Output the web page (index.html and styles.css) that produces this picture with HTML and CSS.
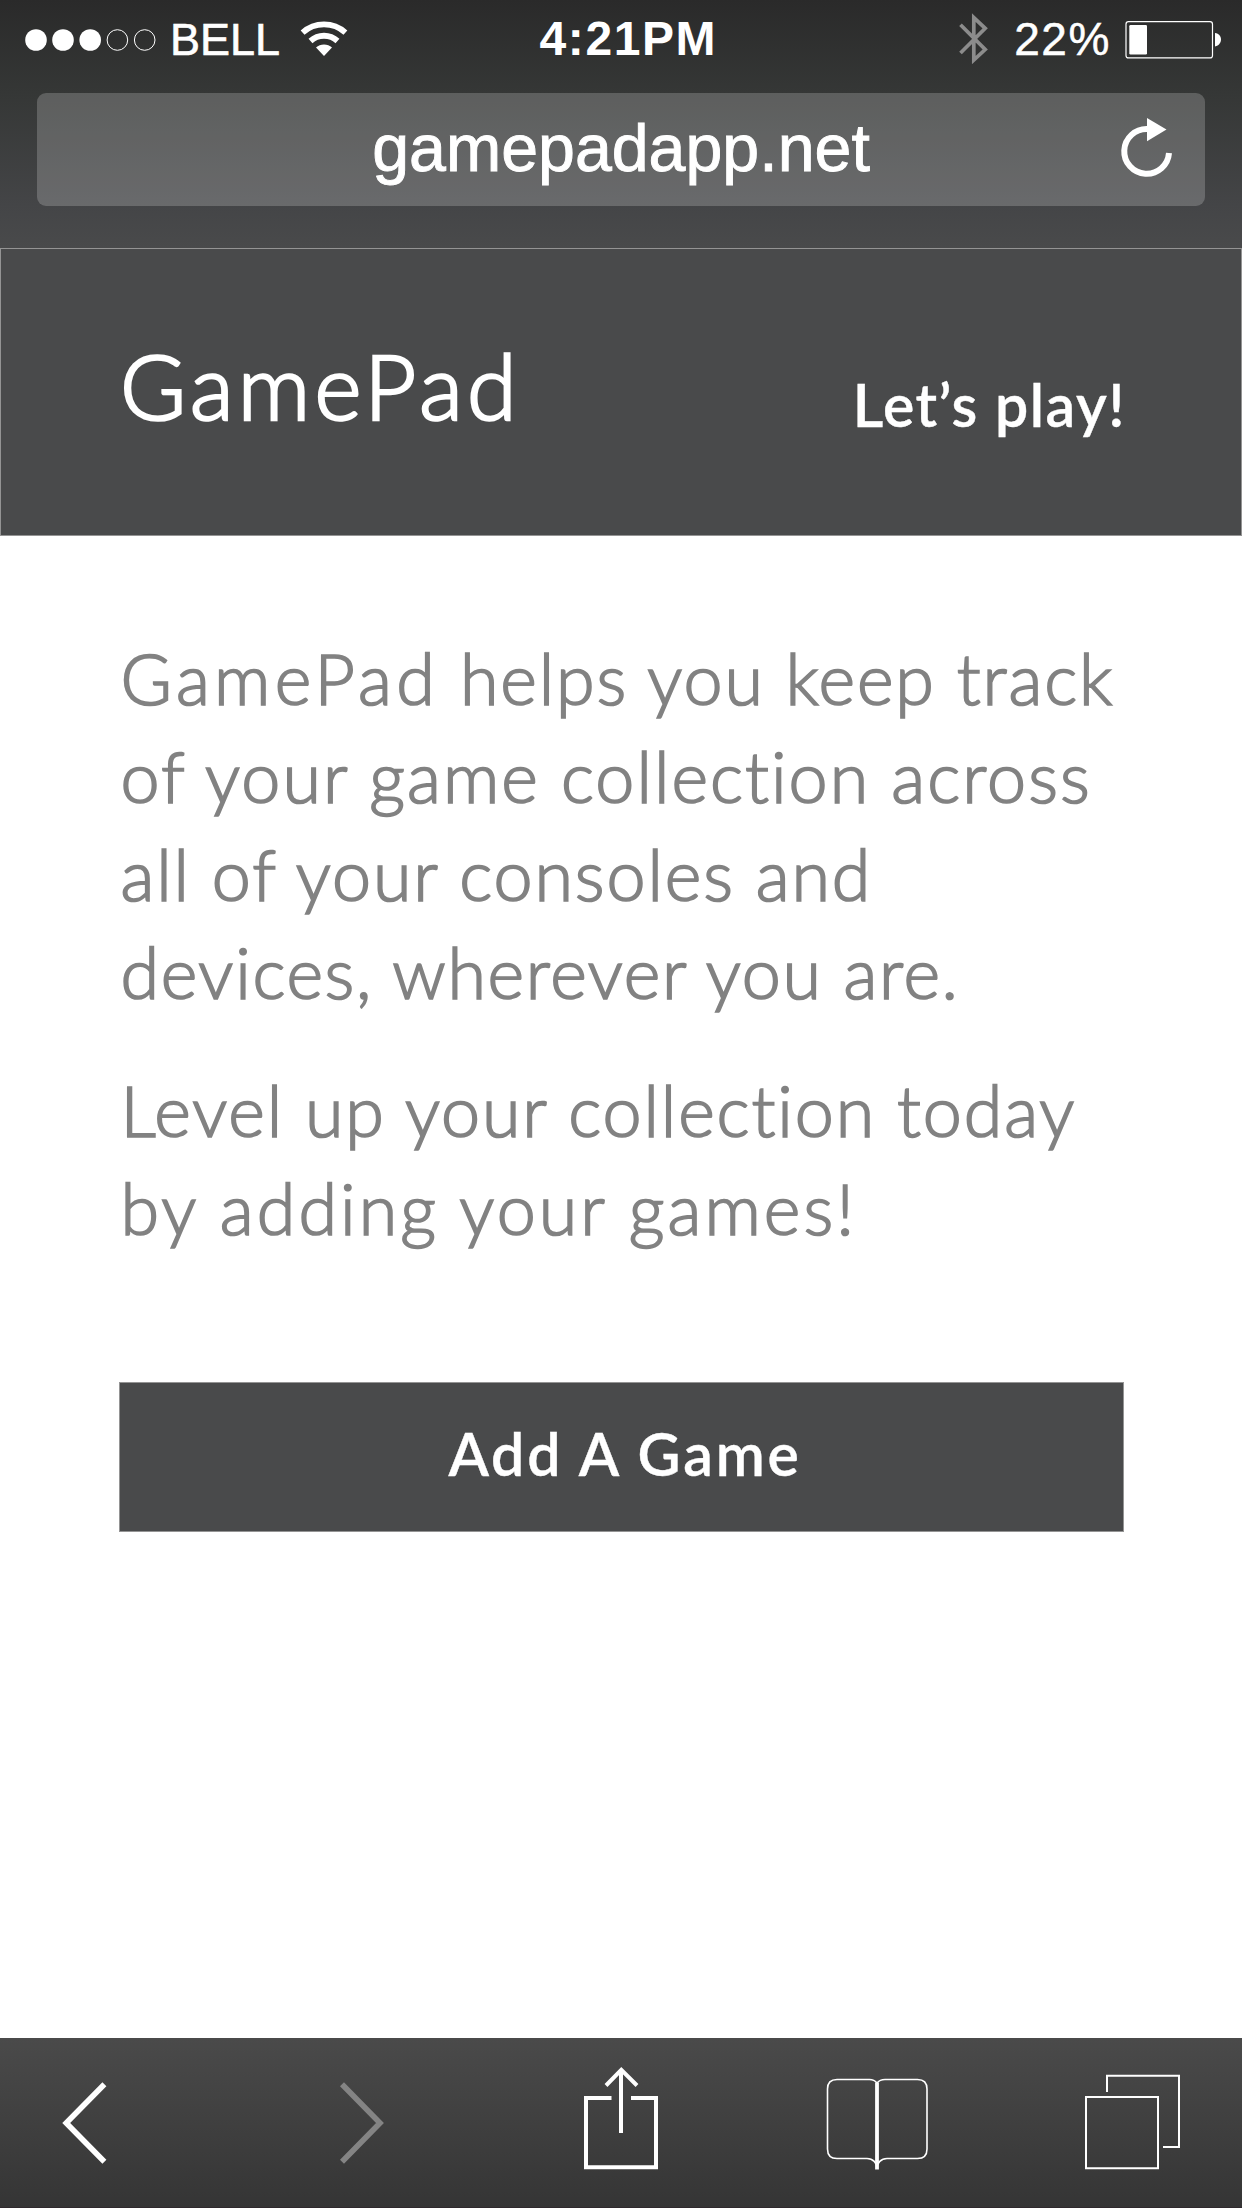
FILE: index.html
```
<!DOCTYPE html>
<html lang="en">
<head>
<meta charset="utf-8">
<title>GamePad</title>
<link rel="stylesheet" href="styles.css">
</head>
<body>
<div class="screen">
  <div class="chrome">
    <div class="status">
      <div class="status-left">
        <svg class="dots" viewBox="24 0 134 93" width="134" height="93">
          <g fill="#fff"><circle cx="36" cy="40" r="10.8"/><circle cx="63" cy="40" r="10.8"/><circle cx="90.2" cy="40" r="10.8"/></g>
          <g fill="none" stroke="#fff" stroke-width="1"><circle cx="117.4" cy="40" r="10.3"/><circle cx="144.7" cy="40" r="10.3"/></g>
        </svg>
        <span class="carrier">BELL</span>
        <svg class="wifi" viewBox="296 0 56 93" width="56" height="93">
          <g fill="none" stroke="#fff" stroke-width="5.8">
            <path d="M302.6 32.6A32 32 0 0 1 345.4 32.6"/>
            <path d="M310.5 41A20 20 0 0 1 337.5 41"/>
          </g>
          <path d="M324 56L316 47.6A11.7 11.7 0 0 1 332 47.6Z" fill="#fff"/>
        </svg>
      </div>
      <span class="time">4:21PM</span>
      <div class="status-right">
        <svg class="bluetooth" viewBox="955 0 38 93" width="38" height="93">
          <path d="M960.5 24.7L985.2 49.5L973.8 60V17.6L985.2 28.3L960.5 53" fill="none" stroke="#8c8c8c" stroke-width="3.7" stroke-miterlimit="6"/>
        </svg>
        <span class="percent">22%</span>
        <svg class="battery" viewBox="1120 0 105 93" width="105" height="93">
          <rect x="1126" y="21.7" width="86.5" height="36.2" rx="2.5" fill="none" stroke="#fff" stroke-width="1.2"/>
          <rect x="1129.3" y="25" width="17.7" height="29.4" rx="1.2" fill="#fff"/>
          <path d="M1215 33C1223 34 1223 45 1215 46.4Z" fill="#fff"/>
        </svg>
      </div>
    </div>
    <div class="address">
      <span></span>
      <span class="url">gamepadapp.net</span>
      <svg class="reload" viewBox="1115 93 60 113" width="60" height="113">
        <path d="M1147.5 129A22.4 22.4 0 1 0 1169 153" fill="none" stroke="#fff" stroke-width="6"/>
        <path d="M1147 118L1166.5 129.5L1147 141.2Z" fill="#fff"/>
      </svg>
    </div>
  </div>

  <header class="banner">
    <h1 class="title">GamePad</h1>
    <a class="play">Let’s play!</a>
  </header>

  <main class="content">
    <p class="copy"><span class="brand">GamePad</span> helps you keep track<br><span class="l2">of your game collection across</span><br>all of your consoles and<br><span class="l4">devices, wherever you are.</span></p>
    <p class="copy">Level up your collection today<br><span class="l6">by adding your games!</span></p>
    <a class="button">Add A Game</a>
  </main>

  <nav class="toolbar">
    <svg viewBox="60 2038 50 170" width="50" height="170"><path d="M104.4 2084.3L66.2 2123L104.4 2161.7" fill="none" stroke="#fff" stroke-width="5.6"/></svg>
    <svg viewBox="338 2038 50 170" width="50" height="170"><path d="M342 2084.3L380 2123L342 2161.7" fill="none" stroke="#848484" stroke-width="5.6"/></svg>
    <svg viewBox="580 2038 82 170" width="82" height="170">
      <path d="M611.5 2098H586V2167.3H656V2098H631M621 2133V2071M606 2085.5L621.3 2069.8L637 2085.5" fill="none" stroke="#fff" stroke-width="4"/>
    </svg>
    <svg viewBox="824 2038 106 170" width="106" height="170">
      <g fill="none" stroke="#fff">
        <path stroke-width="1.6" d="M877 2083C875 2080.5 873 2079.5 869.5 2079.5H837Q827.5 2079.5 827.5 2089V2149Q827.5 2158.5 837 2158.5H867C873 2158.5 877 2163 877 2168C877 2163 881 2158.5 887 2158.5H917.5Q927 2158.5 927 2149V2089Q927 2079.5 917.5 2079.5H885C881.5 2079.5 879 2080.5 877 2083"/>
        <path stroke-width="3.8" d="M877 2082.5V2169.5"/>
      </g>
    </svg>
    <svg viewBox="1082 2038 100 170" width="100" height="170">
      <path d="M1086 2097H1158V2168.3H1086ZM1107 2092V2075.7H1179V2147H1163" fill="none" stroke="#fff" stroke-width="2"/>
    </svg>
  </nav>
</div>
</body>
</html>
```
FILE: styles.css
```
* { box-sizing: border-box; }
body { margin: 0; background: #fff; }
svg { display: block; flex: none; }

.screen {
  width: 1242px;
  height: 2208px;
  display: flex;
  flex-direction: column;
  overflow: hidden;
}

/* Browser chrome: status row and address bar */
.chrome {
  height: 248px;
  flex: none;
  background: linear-gradient(#2a2a2a 0, #353736 93px, #444547 205px, #494a4b 248px);
  color: #fff;
  font-family: "Liberation Sans", Arial, sans-serif;
}
.status {
  height: 93px;
  display: grid;
  grid-template-columns: 539.5px auto 1fr;
  white-space: nowrap;
}
.status-left, .status-right { display: flex; }
.status-left { padding-left: 24px; }
.status-right { justify-content: flex-end; padding-right: 17px; }
.carrier { font-size: 45px; line-height: 50px; margin: 15px 16px 0 12px; -webkit-text-stroke: .6px #fff; }
.time { font-size: 48px; font-weight: 700; line-height: 54px; letter-spacing: 1.6px; padding-top: 12px; }
.percent { font-size: 46px; line-height: 52px; letter-spacing: 1.6px; margin: 13px 9px 0 21px; -webkit-text-stroke: .5px #fff; }

.address {
  height: 113px;
  margin: 0 37px;
  padding: 0 30px;
  border-radius: 9px;
  background: rgba(255, 255, 255, .2);
  display: grid;
  grid-template-columns: 1fr auto 1fr;
}
.url { font-size: 66.3px; line-height: 74px; padding-top: 18px; -webkit-text-stroke: .9px #fff; }
.reload { justify-self: end; }

/* Site header */
.banner {
  height: 288px;
  flex: none;
  border: 1px solid #949494;
  background: #494a4b;
  color: #fff;
  padding: 82px 115px 0 119px;
  display: flex;
  justify-content: space-between;
  align-items: flex-start;
  font-family: Lato, "Open Sans", sans-serif;
}
.title {
  margin: 0;
  font-size: 90px;
  font-weight: 300;
  line-height: 108px;
  letter-spacing: 4.3px;
  -webkit-text-stroke: 2.6px #fff;
}
.play {
  margin-top: 38px;
  font-size: 59px;
  font-weight: 600;
  line-height: 71px;
  letter-spacing: 1.5px;
  -webkit-text-stroke: .4px #fff;
}

/* Page body */
.content {
  flex: 1;
  padding: 93px 118px 0 119px;
  font-family: Lato, "Open Sans", sans-serif;
}
.copy {
  margin: 0 0 40px;
  padding-left: 1.5px;
  color: #828282;
  font-size: 70px;
  font-weight: 300;
  line-height: 98px;
  letter-spacing: 1.88px;
  white-space: nowrap;
  -webkit-text-stroke: 1.7px #828282;
}
.brand { letter-spacing: 4.3px; }
.l2 { letter-spacing: 2.04px; }
.l4 { letter-spacing: 1.68px; }
.l6 { letter-spacing: 3.06px; }
.button {
  display: block;
  height: 150px;
  margin-top: 125px;
  padding: 35px 0 0 7px;
  border: 1px solid #949494;
  background: #494a4b;
  color: #fff;
  text-align: center;
  font-size: 59px;
  font-weight: 600;
  line-height: 71px;
  letter-spacing: 2.8px;
  -webkit-text-stroke: .4px #fff;
}

/* Bottom toolbar */
.toolbar {
  height: 170px;
  flex: none;
  padding-left: 60px;
  border-bottom: 1px solid #2f292d;
  background: linear-gradient(#4a4a4a, #353535);
  display: grid;
  grid-template-columns: 278px 242px 244px 258px auto;
}
```
